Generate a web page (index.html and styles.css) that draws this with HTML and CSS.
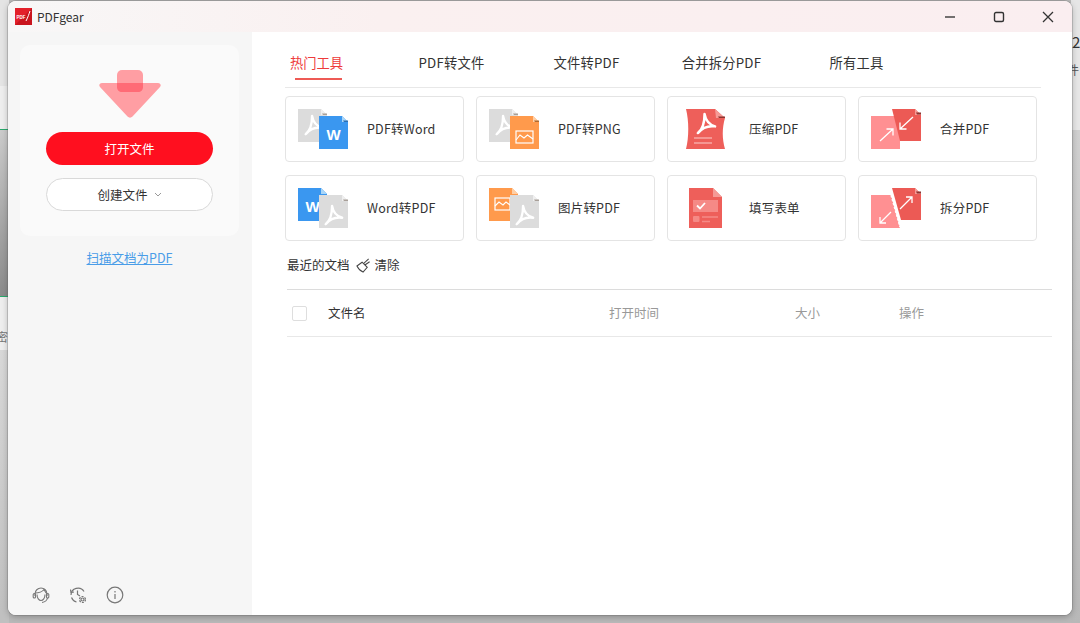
FILE: index.html
```html
<!DOCTYPE html>
<html lang="zh-CN">
<head>
<meta charset="utf-8">
<title>PDFgear</title>
<link rel="stylesheet" href="styles.css">
</head>
<body>
<svg class="defs" xmlns="http://www.w3.org/2000/svg">
  <symbol id="acro" viewBox="-12 -12 24 24">
    <path d="M-8 10C-4 7-1 0-1-10C0-4 3 1 10 3C3 2-3 4-8 10Z" fill="none" stroke="#fff" stroke-width="2.600" stroke-linejoin="round"/>
  </symbol>
  <symbol id="doc-gray-back" viewBox="0 0 50 40">
    <path d="M0 0H23L29 6V33H0Z" fill="#dcdcdc"/><path d="M23 0L29 6H23Z" fill="#efefef"/><path d="M24 4.500H29V6H25Z" fill="#a89f98"/>
    <use href="#acro" x="4" y="5" width="22" height="22"/>
  </symbol>
  <symbol id="doc-gray-front" viewBox="0 0 50 40">
    <path d="M21 7H44L50 13V40H21Z" fill="#dcdcdc"/><path d="M44 7L50 13H44Z" fill="#efefef"/><path d="M45 11.500H50V13H46Z" fill="#a89f98"/>
    <use href="#acro" x="24" y="16" width="22" height="22"/>
  </symbol>
</svg>

<div class="desktop">
  <div class="bg-left">
    <div class="bg-band"></div>
    <span class="bg-glyph">密</span>
  </div>
  <div class="bg-right">
    <span class="bg-two">2</span>
    <span class="bg-jian">件</span>
    <div class="bg-right-low"></div>
  </div>

  <div class="window">
    <header class="titlebar">
      <div class="brand">
        <svg class="logo" viewBox="0 0 17 17"><rect width="17" height="17" fill="#e3202a"/><path d="M0 17L17 0V17Z" fill="#c9151e"/><text x="1.500" y="10.500" class="logo-text">PDF</text><path d="M11 13C13 9 14 6 15 3" stroke="#fff" stroke-width="1" fill="none"/></svg>
        <span class="brand-name">PDFgear</span>
      </div>
      <div class="win-controls">
        <svg class="win-btn" viewBox="0 0 12 12"><path d="M1 6H11" stroke="#444" stroke-width="1.300"/></svg>
        <svg class="win-btn" viewBox="0 0 12 12"><rect x="1.500" y="1.500" width="9" height="9" rx="1.500" fill="none" stroke="#333" stroke-width="1.400"/></svg>
        <svg class="win-btn" viewBox="0 0 12 12"><path d="M1 1L11 11M11 1L1 11" stroke="#333" stroke-width="1.300"/></svg>
      </div>
    </header>
    <div class="body">
      <aside class="sidebar">
        <div class="open-card">
          <svg class="drop-icon" viewBox="0 0 62 48">
            <path d="M3 13H59C61.500 13 62.500 15.500 61 17L33.500 46.500C32 48 30 48 28.500 46.500L1 17C-.5 15.500.5 13 3 13Z" fill="#ff9ea3"/>
            <rect x="18" width="26" height="22" rx="5" fill="#ff9ea3"/>
            <path d="M18 13H44V17C44 20 42 22 39 22H23C20 22 18 20 18 17Z" fill="#ff6b76"/>
          </svg>
          <button class="btn btn-primary">打开文件</button>
          <button class="btn btn-outline">创建文件<svg class="chev" viewBox="0 0 8 5"><path d="M1 1L4 4L7 1" fill="none" stroke="#999" stroke-width="1"/></svg></button>
        </div>
        <a class="scan-link">扫描文档为PDF</a>
        <div class="side-icons">
          <svg class="side-icon" viewBox="0 0 18 18" fill="none" stroke="#777" stroke-width="1.100"><path d="M3 10V8a6 6 0 0 1 12 0v2"/><path d="M3 7C6 7 10 6 12 3.500C13 5.500 14 7 15 7.500"/><rect x="1.200" y="7.500" width="2.300" height="4.500" rx="1"/><rect x="14.500" y="7.500" width="2.300" height="4.500" rx="1"/><path d="M5 8.500C5 12 7 14.500 9 14.500S13 12 13 8.500"/><path d="M15.500 12C15 14.500 13 16 10 16.500"/></svg>
          <svg class="side-icon" viewBox="0 0 18 18" fill="none" stroke="#777" stroke-width="1.200"><path d="M2 9A7 7 0 0 1 15 5.500"/><path d="M1.500 3.500L2 6.500L5 6"/><path d="M8.500 4.500V8.500L11 10"/><path d="M2.500 11.500C3.500 14 5 15.500 7.500 16"/><circle cx="13.500" cy="13.500" r="1.500"/><circle cx="13.500" cy="13.500" r="3" stroke-dasharray="2 1.200"/></svg>
          <svg class="side-icon" viewBox="0 0 18 18" fill="none" stroke="#777" stroke-width="1.200"><circle cx="9" cy="9" r="7.800"/><path d="M9 8V13"/><path d="M9 5V6.400"/></svg>
        </div>
      </aside>
      <main class="main">
        <nav class="tabs">
          <div class="tabs-row">
            <span class="tab tab-active">热门工具</span>
            <span class="tab">PDF转文件</span>
            <span class="tab">文件转PDF</span>
            <span class="tab">合并拆分PDF</span>
            <span class="tab">所有工具</span>
          </div>
        </nav>
        <section class="tools">
          <div class="tool">
            <svg class="tool-icon" viewBox="0 0 50 40"><use href="#doc-gray-back"/><path d="M21 7H44L50 13V40H21Z" fill="#3a97f0"/><path d="M44 7L50 13H44Z" fill="#a9d6f8"/><path d="M45 11.500H50V13H46Z" fill="#2b6fb3"/><text x="35.500" y="31" class="w-letter">W</text></svg>
            <span class="tool-name">PDF转Word</span>
          </div>
          <div class="tool">
            <svg class="tool-icon" viewBox="0 0 50 40"><use href="#doc-gray-back"/><path d="M21 7H44L50 13V40H21Z" fill="#ff9a4c"/><path d="M44 7L50 13H44Z" fill="#ffcfa6"/><path d="M45 11.500H50V13H46Z" fill="#b06a30"/><rect x="27" y="22" width="17" height="12" fill="none" stroke="#fff" stroke-width="1.200"/><path d="M27 31L31 26L35 29L38.500 26L44 30" fill="none" stroke="#fff" stroke-width="1.100"/></svg>
            <span class="tool-name">PDF转PNG</span>
          </div>
          <div class="tool">
            <svg class="tool-icon" viewBox="0 0 50 40"><path d="M6 0H35L45 9C42 19 42 30 45 40H6C9 28 9 12 6 0Z" fill="#ee5f5a"/><path d="M35 0L45 9H36Z" fill="#f59a96"/><path d="M38 7.500H45V9H39Z" fill="#8c3430"/><use href="#acro" x="14" y="3" width="23" height="23"/><path d="M14 29H32M14 34H32" stroke="#f8a9a6" stroke-width="1.500"/></svg>
            <span class="tool-name">压缩PDF</span>
          </div>
          <div class="tool">
            <svg class="tool-icon" viewBox="0 0 50 40"><path d="M0 7H29V40H0Z" fill="#ff9092"/><path d="M21 0H44L50 6V32H29Z" fill="#ec5a55"/><path d="M44 0L50 6H44Z" fill="#f59a96"/><path d="M45 3.500H50V5.500H46Z" fill="#8c3430"/><g fill="none" stroke="#fff" stroke-width="1.300"><path d="M9 32L22 20M15.500 20H22V26.500"/><path d="M42 8L29 20M29 13.500V20H35.500"/></g></svg>
            <span class="tool-name">合并PDF</span>
          </div>
          <div class="tool">
            <svg class="tool-icon" viewBox="0 0 50 40"><path d="M0 0H23L29 6V33H0Z" fill="#3a97f0"/><path d="M23 0L29 6H23Z" fill="#a9d6f8"/><text x="14.500" y="24" class="w-letter">W</text><use href="#doc-gray-front"/></svg>
            <span class="tool-name">Word转PDF</span>
          </div>
          <div class="tool">
            <svg class="tool-icon" viewBox="0 0 50 40"><path d="M0 0H23L29 6V33H0Z" fill="#ff9a4c"/><path d="M23 0L29 6H23Z" fill="#ffcfa6"/><rect x="6" y="10" width="15" height="12" fill="none" stroke="#fff" stroke-width="1.200"/><path d="M6 18L10 14L14 17L17 14L21 17" fill="none" stroke="#fff" stroke-width="1.100"/><use href="#doc-gray-front"/></svg>
            <span class="tool-name">图片转PDF</span>
          </div>
          <div class="tool">
            <svg class="tool-icon" viewBox="0 0 50 40"><path d="M9 0H33L42 9V40H9Z" fill="#ee5f5a"/><path d="M33 0L42 9H33Z" fill="#f59a96"/><rect x="13" y="12" width="25" height="12" fill="#f58a86"/><path d="M17 17.500L20 20.500L25 15" fill="none" stroke="#fff" stroke-width="1.800"/><rect x="13" y="28" width="6.500" height="6" rx="1" fill="#f58a86"/><path d="M22 29H38M22 33.500H30" stroke="#f58a86" stroke-width="1.500"/></svg>
            <span class="tool-name">填写表单</span>
          </div>
          <div class="tool">
            <svg class="tool-icon" viewBox="0 0 50 40"><path d="M0 7H20L29 40H0Z" fill="#ff9092"/><path d="M21 0H44L50 6V32H30Z" fill="#ec5a55"/><path d="M44 0L50 6H44Z" fill="#f59a96"/><path d="M45 3.500H50V5.500H46Z" fill="#8c3430"/><path d="M20.500 7L29.500 39" stroke="#fff" stroke-width="2.400" stroke-dasharray="2.500 1.500"/><g fill="none" stroke="#fff" stroke-width="1.300"><path d="M9 35L20 24M9 29V35H15"/><path d="M29 21L41 9M35 9H41V15"/></g></svg>
            <span class="tool-name">拆分PDF</span>
          </div>
        </section>
        <div class="recent">
          <span>最近的文档</span>
          <svg class="broom" viewBox="0 0 16 16" fill="none" stroke="#444" stroke-width="1.100"><path d="M1 8.500L6.500 4.500L12 10L7.500 15C5 14 2.500 11.500 1 8.500Z"/><path d="M8 6L13.500 1"/><path d="M9.500 7.500L14.500 4"/></svg>
          <span class="clear">清除</span>
        </div>
        <div class="table-head">
          <span class="check"></span>
          <span class="col-name">文件名</span>
          <span class="col-muted">打开时间</span>
          <span class="col-muted">大小</span>
          <span class="col-muted">操作</span>
        </div>
      </main>
    </div>
  </div>
</div>
</body>
</html>
```
FILE: styles.css
```css
* { box-sizing: border-box; }
html, body { margin: 0; padding: 0; }
body {
  font-family: "Noto Sans CJK SC", "Noto Sans", sans-serif;
  color: #333;
  overflow: hidden;
}
.defs { display: none; }

.desktop {
  position: relative;
  width: 1080px;
  height: 623px;
  overflow: hidden;
  background: #b9b9b9;
}
.bg-left {
  position: absolute;
  left: 0;
  top: 0;
  width: 9px;
  height: 623px;
  background: linear-gradient(#e4e4e4 0, #e4e4e4 86px, #eeeeee 86px, #eeeeee 350px, #d8d8d8 350px, #c0c0c0 615px);
  overflow: hidden;
}
.bg-band {
  position: absolute;
  left: 0;
  top: 129px;
  width: 9px;
  height: 168px;
  border-top: 1.500px solid #2aa86c;
  border-bottom: 1.500px solid #2aa86c;
  background: linear-gradient(#cbcbcb, #8b8b8b);
}
.bg-glyph {
  position: absolute;
  left: -4px;
  top: 328px;
  font-size: 12px;
  line-height: 18px;
  color: #777;
}
.bg-right {
  position: absolute;
  right: 0;
  top: 0;
  width: 9px;
  height: 623px;
  background: #e6e6e6;
  overflow: hidden;
}
.bg-two {
  position: absolute;
  left: 1px;
  top: 31px;
  font-size: 15px;
  line-height: 22px;
  color: #333;
}
.bg-jian {
  position: absolute;
  left: -4px;
  top: 61px;
  font-size: 12px;
  line-height: 18px;
  color: #555;
}
.bg-right-low {
  position: absolute;
  left: 0;
  top: 130px;
  width: 9px;
  height: 493px;
  background: linear-gradient(#d0d0d0, #b8b8b8);
}

.window {
  position: absolute;
  left: 8px;
  top: 1px;
  width: 1064px;
  height: 614px;
  border-radius: 8px;
  background: #fff;
  box-shadow: 0 0 0 1px rgba(90, 90, 90, .25), 0 2px 6px rgba(0, 0, 0, .25);
  overflow: hidden;
  display: flex;
  flex-direction: column;
}
.titlebar {
  height: 31px;
  flex: none;
  display: flex;
  align-items: center;
  justify-content: space-between;
  background: linear-gradient(90deg, #f8f7f7 0, #faf0f0 35%, #faeef0 100%);
}
.brand {
  display: flex;
  align-items: center;
  gap: 5px;
  padding-left: 7px;
}
.logo { width: 17px; height: 17px; display: block; }
.logo-text { font-family: "Liberation Sans", sans-serif; font-size: 4.500px; font-weight: 700; fill: #fff; }
.brand-name { font-size: 12px; line-height: 18px; color: #333; }
.win-controls {
  display: flex;
  align-items: center;
  gap: 37px;
  padding-right: 18px;
}
.win-btn { width: 12px; height: 12px; display: block; }

.body { flex: 1; display: flex; min-height: 0; }
.sidebar {
  width: 244px;
  flex: none;
  background: #f6f6f6;
  display: flex;
  flex-direction: column;
  padding: 13px 13px 11px 12px;
}
.open-card {
  height: 191px;
  border-radius: 10px;
  background: #fafafa;
  display: flex;
  flex-direction: column;
  align-items: center;
  padding-top: 25px;
}
.drop-icon { width: 62px; height: 48px; display: block; flex: none; }
.btn {
  width: 167px;
  height: 33px;
  border-radius: 17px;
  font-family: inherit;
  font-size: 12.500px;
  display: flex;
  align-items: center;
  justify-content: center;
  padding: 0;
}
.btn-primary {
  margin-top: 14px;
  background: #ff0f1f;
  border: 0;
  color: #fff;
}
.btn-outline {
  margin-top: 13px;
  background: #fff;
  border: 1px solid #d9d9d9;
  color: #333;
  gap: 6px;
}
.chev { width: 8px; height: 5px; display: block; }
.scan-link {
  margin-top: 12px;
  text-align: center;
  font-size: 12.500px;
  line-height: 20px;
  color: #4a9de8;
  text-decoration: underline;
}
.side-icons {
  margin-top: auto;
  padding-left: 12px;
  display: flex;
  gap: 19px;
}
.side-icon { width: 18px; height: 18px; display: block; }

.main { flex: 1; min-width: 0; display: flex; flex-direction: column; background: #fff; }
.tabs {
  margin-left: 33px;
  width: 756px;
  height: 55.500px;
  flex: none;
  border-bottom: 1.500px solid #e8e8e8;
}
.tabs-row { display: flex; margin-left: -36px; }
.tab {
  position: relative;
  width: 135px;
  flex: none;
  height: 54px;
  padding-top: 21px;
  text-align: center;
  font-size: 13.300px;
  letter-spacing: .2px;
  line-height: 20px;
  color: #333;
}
.tab-active { color: #ee3b3b; letter-spacing: 0; }
.tab-active::after {
  content: "";
  position: absolute;
  left: 46px;
  top: 46px;
  width: 47px;
  height: 1.500px;
  background: #ee5a55;
}
.tools {
  margin: 8.500px 0 0 33px;
  display: grid;
  grid-template-columns: repeat(4, 178.500px);
  grid-auto-rows: 66px;
  column-gap: 12.500px;
  row-gap: 13px;
}
.tool {
  border: 1px solid #e4e4e4;
  border-radius: 4px;
  display: flex;
  align-items: center;
  gap: 19px;
  padding-left: 12px;
  background: #fff;
}
.tool-icon { width: 50px; height: 40px; display: block; flex: none; }
.tool-name { font-size: 12.500px; letter-spacing: .2px; line-height: 18px; color: #333; }
.w-letter {
  font-family: "Liberation Sans", sans-serif;
  font-size: 15px;
  font-weight: 700;
  fill: #fff;
  text-anchor: middle;
}
.recent {
  margin: 14px 0 0 35px;
  height: 20px;
  display: flex;
  align-items: center;
  font-size: 12.500px;
  line-height: 20px;
  color: #333;
}
.broom { width: 15px; height: 15px; margin-left: 6px; display: block; }
.clear { margin-left: 4px; }
.table-head {
  margin: 14px 0 0 35px;
  width: 765px;
  height: 48px;
  border-top: 1px solid #dcdcdc;
  border-bottom: 1.500px solid #e8e8e8;
  display: grid;
  grid-template-columns: 41px 281px 186px 104px 1fr;
  align-items: center;
  font-size: 12.500px;
  line-height: 18px;
}
.check {
  margin-left: 5px;
  width: 15px;
  height: 15px;
  border: 1px solid #dedede;
  border-radius: 2px;
  background: #fff;
}
.col-name { color: #333; }
.col-muted { color: #999; }
```
